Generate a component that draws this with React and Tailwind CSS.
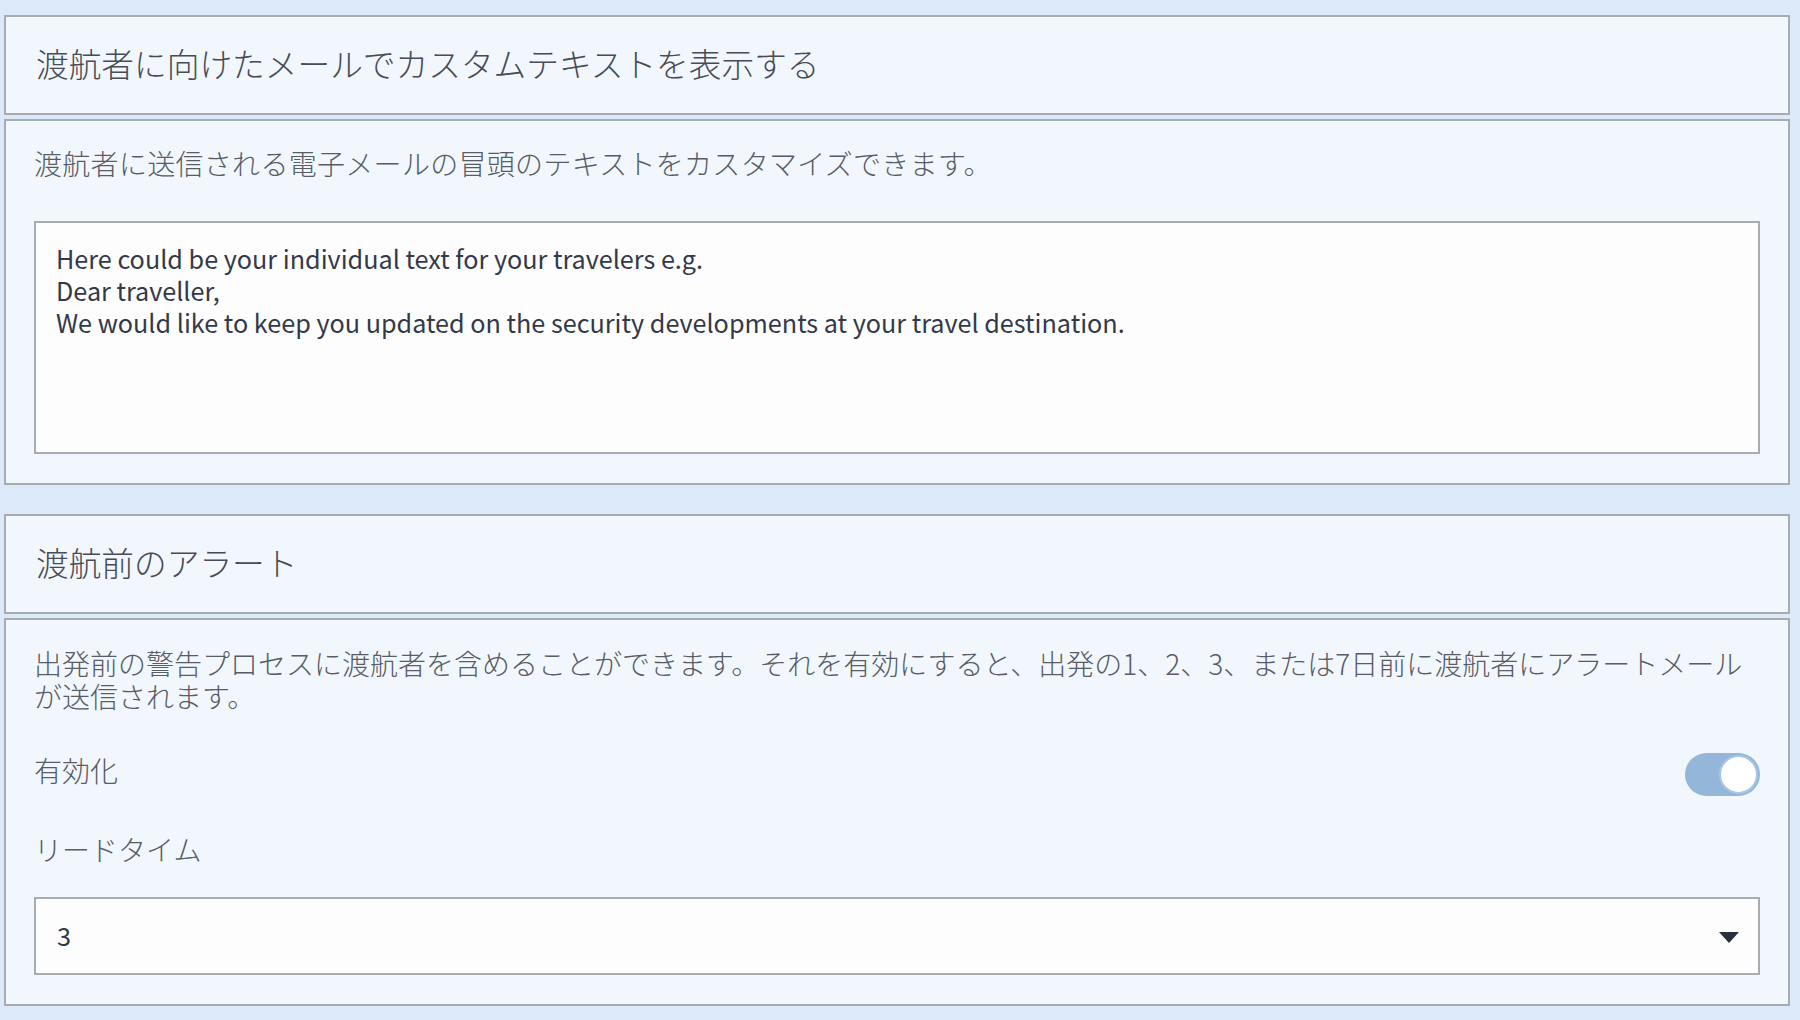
import React, { useState } from 'react';

const font = "font-['Noto_Sans_CJK_JP','Noto_Sans',sans-serif]";

function Panel({ children, className = '' }) {
  return (
    <div className={`border-2 border-[#a8abaf] bg-[#f2f7fd] ${className}`}>
      {children}
    </div>
  );
}

export default function App() {
  const [enabled, setEnabled] = useState(true);
  const [leadTime, setLeadTime] = useState('3');

  return (
    <div className={`min-h-screen bg-[#dbe9f8] pl-[4px] pr-[10px] pt-[15px] ${font}`}>
      {/* custom text in traveller mails */}
      <section>
        <Panel className="flex h-[100px] items-center px-[30px] pb-[5px]">
          <h2 className="text-[32.7px] font-light text-[#474c56]">
            渡航者に向けたメールでカスタムテキストを表示する
          </h2>
        </Panel>
        <Panel className="mt-[4px] px-[28px] pb-[29px] pt-[26px]">
          <p className="text-[28px] font-light leading-[33px] tracking-[0.3px] text-[#575c65]">
            渡航者に送信される電子メールの冒頭のテキストをカスタマイズできます。
          </p>
          <textarea
            readOnly
            className="mt-[41px] block h-[233px] w-full resize-none border-2 border-[#a8abaf] bg-[#fdfdfe] px-[20px] pt-[19px] text-[25.2px] leading-[32px] text-[#333948] outline-none"
            defaultValue={
              'Here could be your individual text for your travelers e.g.\nDear traveller,\nWe would like to keep you updated on the security developments at your travel destination.'
            }
          />
        </Panel>
      </section>

      {/* pre-trip alert */}
      <section className="mt-[29px]">
        <Panel className="flex h-[100px] items-center px-[30px] pb-[5px]">
          <h2 className="text-[32.7px] font-light text-[#474c56]">渡航前のアラート</h2>
        </Panel>
        <Panel className="mt-[4px] px-[28px] pb-[29px] pt-[27px]">
          <p className="text-[28px] font-light leading-[33px] text-[#575c65]">
            出発前の警告プロセスに渡航者を含めることができます。それを有効にすると、出発の1、2、3、または7日前に渡航者にアラートメールが送信されます。
          </p>

          <div className="mt-[40px] flex items-start justify-between">
            <span className="mt-[1px] text-[28px] font-light leading-[33px] text-[#575c65]">有効化</span>
            <button
              onClick={() => setEnabled(!enabled)}
              className={`flex h-[43px] w-[75px] items-center rounded-full px-[2px] ${
                enabled ? 'justify-end bg-[#94b6d9]' : 'justify-start bg-[#c5c9ce]'
              }`}
            >
              <span className="block h-[39px] w-[39px] rounded-full border-2 border-[#a9c6e4] bg-white" />
            </button>
          </div>

          <p className="mt-[37px] text-[28px] font-light leading-[33px] text-[#575c65]">リードタイム</p>

          <div className="relative mt-[31px]">
            <select
              value={leadTime}
              onChange={(e) => setLeadTime(e.target.value)}
              className="block h-[78px] w-full appearance-none border-2 border-[#a8abaf] bg-[#fdfdfe] px-[21px] text-[25.2px] text-[#333948] outline-none"
            >
              <option value="1">1</option>
              <option value="2">2</option>
              <option value="3">3</option>
              <option value="7">7</option>
            </select>
            <svg
              className="pointer-events-none absolute right-[21px] top-[35px]"
              width="20"
              height="11"
              viewBox="0 0 20 11"
            >
              <polygon points="0,0 20,0 10,11" fill="#2a2f3d" />
            </svg>
          </div>
        </Panel>
      </section>
    </div>
  );
}
